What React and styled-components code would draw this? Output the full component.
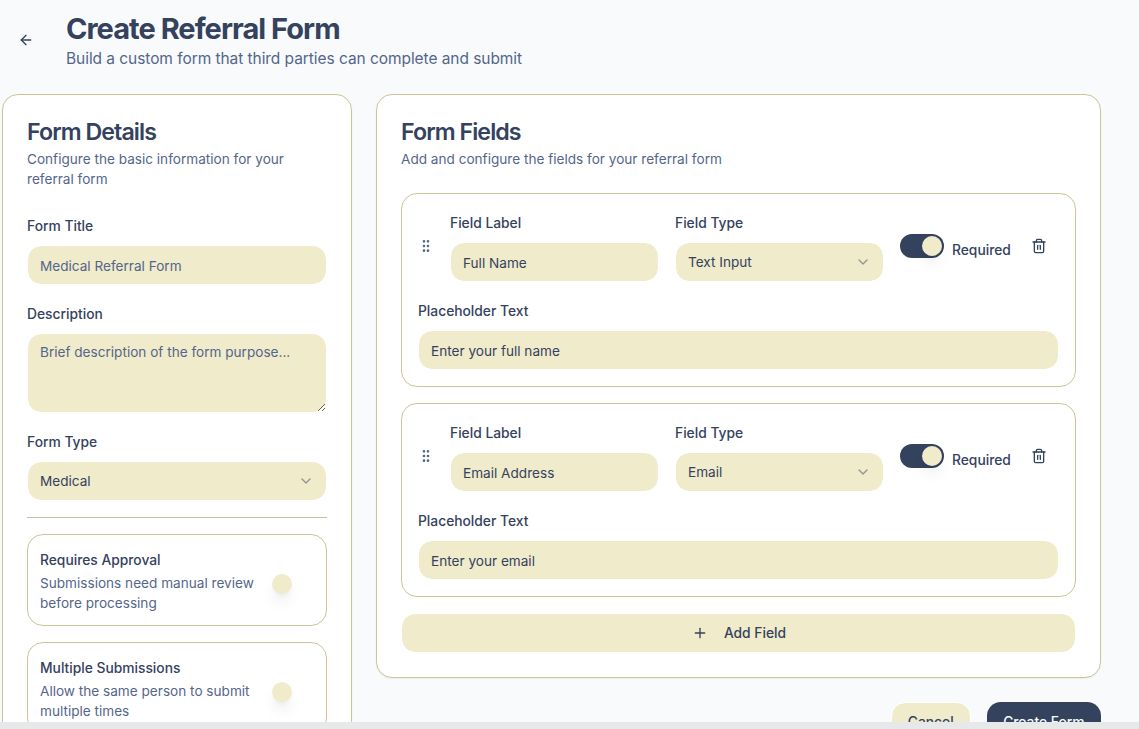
import React from 'react';
import styled, { createGlobalStyle, css } from 'styled-components';
import { ArrowLeft, ChevronDown, GripVertical, Plus, Trash2 } from 'lucide-react';

const navy = '#34425e';
const slate = '#54668a';
const sand = '#f0ebcb';
const line = '#cbc598';

const GlobalStyle = createGlobalStyle`
  *, *::before, *::after { box-sizing: border-box; }
  body {
    margin: 0;
    background: #e7e8ea;
    color: ${navy};
    font-family: Inter, "Liberation Sans", sans-serif;
    font-size: 16px;
    line-height: 24px;
    overflow: hidden;
  }
  h1, h2, p { margin: 0; }
  svg { display: block; flex: none; }
`;

const Page = styled.div`
  height: 722px;
  overflow: hidden;
  background: #f8fafc;
  padding: 10px 0 0 2px;
`;

const Header = styled.header`
  display: flex;
  align-items: center;
  gap: 20px;
  padding-left: 4px;
  margin-bottom: 24px;
`;

const IconButton = styled.button`
  display: flex;
  align-items: center;
  justify-content: center;
  width: 40px;
  height: 40px;
  padding: 0;
  border: 0;
  background: none;
  color: ${navy};
`;

const RemoveButton = styled(IconButton)`
  margin-right: 1px;
`;

const PageTitle = styled.h1`
  font-size: 29px;
  line-height: 36px;
  font-weight: 700;
  letter-spacing: -0.97px;
  padding-top: 1px;
  height: 36px;
`;

const PageSubtitle = styled.p`
  font-size: 15.5px;
  color: ${slate};
  letter-spacing: -0.06px;
  padding-top: 1px;
  height: 24px;
`;

const Columns = styled.main`
  display: grid;
  grid-template-columns: 350px 725px;
  gap: 24px;
  align-items: start;
`;

const Card = styled.section`
  padding: 24px;
  border: 1px solid ${line};
  border-radius: 16px;
  background: #fff;
  box-shadow: 0 1px 2px rgba(0, 0, 0, 0.05);
`;

const CardHeader = styled.div`
  display: flex;
  flex-direction: column;
  gap: 6px;
  margin-bottom: 24px;
`;

const CardTitle = styled.h2`
  font-size: 23.2px;
  line-height: 24px;
  font-weight: 600;
  letter-spacing: -0.93px;
  padding-top: 1px;
  height: 24px;
`;

const Muted = styled.p`
  font-size: 13.6px;
  line-height: 20px;
  color: ${slate};
`;

const Stack = styled.div`
  display: flex;
  flex-direction: column;
  gap: 16px;
`;

const Field = styled.div`
  display: flex;
  flex-direction: column;
  gap: 8px;
  min-width: 0;
`;

const Label = styled.label`
  font-size: 13.8px;
  line-height: 24px;
  font-weight: 500;
  padding-top: 1px;
  height: 24px;
`;

const control = css`
  width: 100%;
  border: 1px solid #fff;
  border-radius: 14px;
  background: ${sand};
  background-clip: padding-box;
  color: ${navy};
  font: 400 13.6px/20px Inter, "Liberation Sans", sans-serif;
  outline: none;
  &::placeholder { color: ${slate}; opacity: 1; }
`;

const Input = styled.input`
  ${control}
  height: 40px;
  padding: 9px 12px 7px;
`;

const TextArea = styled.textarea`
  ${control}
  display: block;
  height: 80px;
  padding: 8px 12px;
`;

const SelectTrigger = styled.button`
  ${control}
  display: flex;
  align-items: center;
  justify-content: space-between;
  height: 40px;
  padding: 8px 12px;
  svg { opacity: 0.5; }
`;

const Divider = styled.hr`
  width: 100%;
  height: 1px;
  margin: 0;
  border: 0;
  background: #c5c1a0;
`;

const OptionBox = styled.div`
  display: flex;
  align-items: center;
  justify-content: space-between;
  padding: 12px;
  border: 1px solid ${line};
  border-radius: 16px;
`;

const OptionText = styled.div`
  display: flex;
  flex-direction: column;
  gap: 2px;
  width: 222px;
`;

const Track = styled.span`
  display: flex;
  flex: none;
  justify-content: ${(p) => (p.$on ? 'flex-end' : 'flex-start')};
  width: 44px;
  height: 24px;
  padding: 2px;
  border-radius: 12px;
  background: ${(p) => (p.$on ? navy : '#fff')};
  margin-top: ${(p) => (p.$on ? 0 : 8)}px;
`;

const Knob = styled.span`
  width: 20px;
  height: 20px;
  border-radius: 50%;
  background: ${sand};
  box-shadow: 0 10px 15px -3px rgba(0, 0, 0, 0.1), 0 4px 6px -4px rgba(0, 0, 0, 0.1);
`;

const FieldCard = styled.div`
  display: flex;
  flex-direction: column;
  gap: 16px;
  padding: 16px;
  border: 1px solid ${line};
  border-radius: 16px;
`;

const FieldRow = styled.div`
  display: grid;
  grid-template-columns: 16px 209px 209px 1fr;
  gap: 16px;
  align-items: center;
  > svg { color: ${slate}; }
`;

const Controls = styled.div`
  display: flex;
  align-items: center;
  gap: 8px;
`;

const RequiredLabel = styled.span`
  font-size: 13.8px;
  line-height: 14px;
  font-weight: 500;
  margin-top: 8px;
  flex: 1;
`;

const Button = styled.button`
  display: flex;
  align-items: center;
  justify-content: center;
  gap: 16px;
  height: 40px;
  padding: 0 ${(p) => (p.$primary ? 16.5 : 16)}px;
  border: ${(p) => (p.$primary ? '0' : '1px solid #fff')};
  border-radius: 14px;
  background: ${(p) => (p.$primary ? navy : sand)};
  background-clip: padding-box;
  color: ${(p) => (p.$primary ? '#f8fafc' : navy)};
  font: 500 13.8px/20px Inter, "Liberation Sans", sans-serif;
`;

const AddButton = styled(Button)`
  padding-left: 17px;
`;

const Footer = styled.footer`
  display: flex;
  justify-content: flex-end;
  gap: 16px;
  margin-top: 24px;
`;

const Switch = ({ on }) => (
  <Track $on={on} role="switch" aria-checked={!!on}>
    <Knob />
  </Track>
);

const Select = ({ value }) => (
  <SelectTrigger type="button">
    {value}
    <ChevronDown size={16} />
  </SelectTrigger>
);

const Option = ({ title, text }) => (
  <OptionBox>
    <OptionText>
      <Label>{title}</Label>
      <Muted>{text}</Muted>
    </OptionText>
    <Switch />
  </OptionBox>
);

const fields = [
  { label: 'Full Name', type: 'Text Input', placeholder: 'Enter your full name' },
  { label: 'Email Address', type: 'Email', placeholder: 'Enter your email' },
];

const FieldEditor = ({ label, type, placeholder }) => (
  <FieldCard>
    <FieldRow>
      <GripVertical size={16} />
      <Field>
        <Label>Field Label</Label>
        <Input defaultValue={label} />
      </Field>
      <Field>
        <Label>Field Type</Label>
        <Select value={type} />
      </Field>
      <Controls>
        <Switch on />
        <RequiredLabel>Required</RequiredLabel>
        <RemoveButton aria-label="Remove field">
          <Trash2 size={16} />
        </RemoveButton>
      </Controls>
    </FieldRow>
    <Field>
      <Label>Placeholder Text</Label>
      <Input defaultValue={placeholder} />
    </Field>
  </FieldCard>
);

export default function App() {
  return (
    <>
      <GlobalStyle />
      <Page>
        <Header>
          <IconButton aria-label="Back">
            <ArrowLeft size={16} />
          </IconButton>
          <div>
            <PageTitle>Create Referral Form</PageTitle>
            <PageSubtitle>Build a custom form that third parties can complete and submit</PageSubtitle>
          </div>
        </Header>
        <Columns>
          <Card>
            <CardHeader>
              <CardTitle>Form Details</CardTitle>
              <Muted>Configure the basic information for your referral form</Muted>
            </CardHeader>
            <Stack>
              <Field>
                <Label>Form Title</Label>
                <Input placeholder="Medical Referral Form" />
              </Field>
              <Field>
                <Label>Description</Label>
                <TextArea placeholder="Brief description of the form purpose..." />
              </Field>
              <Field>
                <Label>Form Type</Label>
                <Select value="Medical" />
              </Field>
              <Divider />
              <Option title="Requires Approval" text="Submissions need manual review before processing" />
              <Option title="Multiple Submissions" text="Allow the same person to submit multiple times" />
            </Stack>
          </Card>
          <div>
            <Card>
              <CardHeader>
                <CardTitle>Form Fields</CardTitle>
                <Muted>Add and configure the fields for your referral form</Muted>
              </CardHeader>
              <Stack>
                {fields.map((f) => (
                  <FieldEditor key={f.label} {...f} />
                ))}
                <AddButton type="button">
                  <Plus size={16} />
                  Add Field
                </AddButton>
              </Stack>
            </Card>
            <Footer>
              <Button type="button">Cancel</Button>
              <Button type="button" $primary>Create Form</Button>
            </Footer>
          </div>
        </Columns>
      </Page>
    </>
  );
}
